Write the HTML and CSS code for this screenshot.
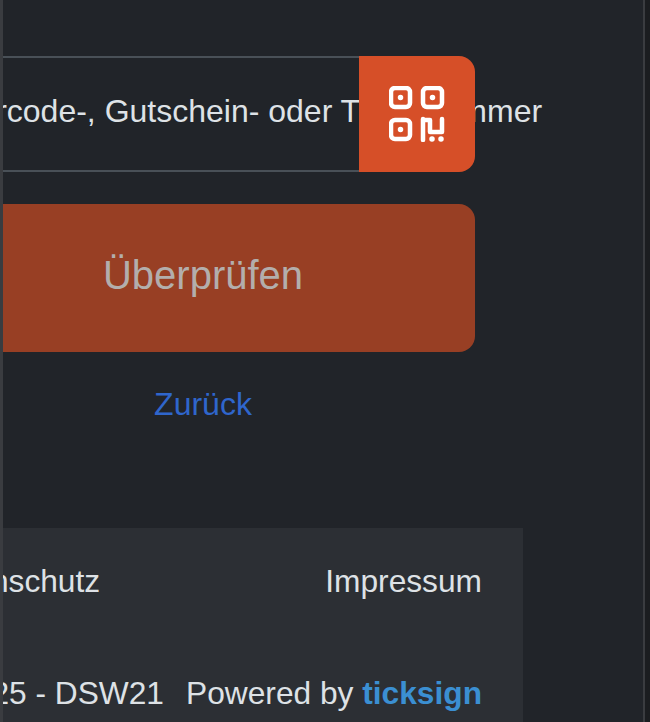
FILE: index.html
```html
<!DOCTYPE html>
<html lang="de">
<head>
    <meta charset="UTF-8">
    <title>Ticket prüfen</title>
    <link rel="stylesheet" href="styles.css">
</head>
<body>
    <div class="frame">
        <div class="page">
            <main class="content">
                <div class="code-row">
                    <div class="code-field">
                        <span class="code-label">Barcode-, Gutschein- oder Ticketnummer</span>
                    </div>
                    <button class="scan-button" type="button" aria-label="Scannen">
                        <svg class="scan-icon" viewBox="0 0 56 56" fill="none" stroke="currentColor" stroke-width="4.5" stroke-linecap="round" stroke-linejoin="round">
                            <rect x="2" y="2" width="19" height="19" rx="4"/>
                            <rect x="34" y="2" width="19" height="19" rx="4"/>
                            <rect x="2" y="34" width="19" height="19" rx="4"/>
                            <path d="M34 33v21M34 34h7v12h12M53 33v13"/>
                            <path d="M11.5 11.5h.01M43.5 11.5h.01M11.5 43.5h.01M43 53h.01M52 53h.01" stroke-width="5.5"/>
                        </svg>
                    </button>
                </div>
                <button class="check-button" type="button">Überprüfen</button>
                <a class="back-link" href="#">Zurück</a>
            </main>
            <footer class="footer">
                <div class="footer-row">
                    <a href="#">Datenschutz</a>
                    <a href="#">Impressum</a>
                </div>
                <div class="footer-row">
                    <span>© 2025 - DSW21</span>
                    <span>Powered by <a class="brand" href="#">ticksign</a></span>
                </div>
            </footer>
        </div>
    </div>
</body>
</html>
```

FILE: styles.css
```css
html, body {
    height: 100%;
}
body {
    margin: 0;
    overflow: hidden;
    background-color: #1b1d20;
    font-family: "Liberation Sans", Arial, sans-serif;
    color: #dee2e6;
}
a {
    color: inherit;
    text-decoration: none;
}
button {
    border: none;
    font-family: inherit;
}
.frame {
    width: 640px;
    height: 722px;
    border-left: 3px solid #3a3c40;
    border-right: 2px solid #3a3c40;
    background-color: #212429;
    overflow: hidden;
}
.page {
    width: 640px;
    height: 722px;
    margin-left: -120px;
    display: flex;
    flex-direction: column;
}
.content {
    flex: none;
    height: 528px;
    box-sizing: border-box;
    padding: 56px 48px 0;
    display: flex;
    flex-direction: column;
    align-items: center;
}
.code-row {
    width: 100%;
    height: 116px;
    display: flex;
}
.code-field {
    flex: 1;
    min-width: 0;
    box-sizing: border-box;
    display: flex;
    align-items: center;
    padding-left: 24px;
    padding-bottom: 6px;
    border: 2px solid #495057;
    border-right: none;
    white-space: nowrap;
    font-size: 32px;
    color: #dee2e6;
}
.scan-button {
    position: relative;
    width: 116px;
    flex: none;
    display: flex;
    align-items: center;
    justify-content: center;
    padding: 0;
    background-color: #d64f28;
    color: #fff;
    border-radius: 0 16px 16px 0;
}
.scan-icon {
    width: 56px;
    height: 56px;
}
.check-button {
    width: 100%;
    height: 148px;
    margin-top: 32px;
    padding-bottom: 6px;
    background-color: #983f24;
    color: #b3aeac;
    font-size: 40px;
    border-radius: 16px;
}
.back-link {
    margin-top: 34px;
    font-size: 32px;
    color: #2f66cc;
}
.footer {
    flex: none;
    height: 194px;
    box-sizing: border-box;
    padding: 35px 41px 0;
    background-color: #2c2f34;
    font-size: 31.7px;
}
.footer-row {
    display: flex;
    justify-content: space-between;
    height: 112px;
}
.brand {
    font-weight: bold;
    color: #3b8fd2;
}
```
